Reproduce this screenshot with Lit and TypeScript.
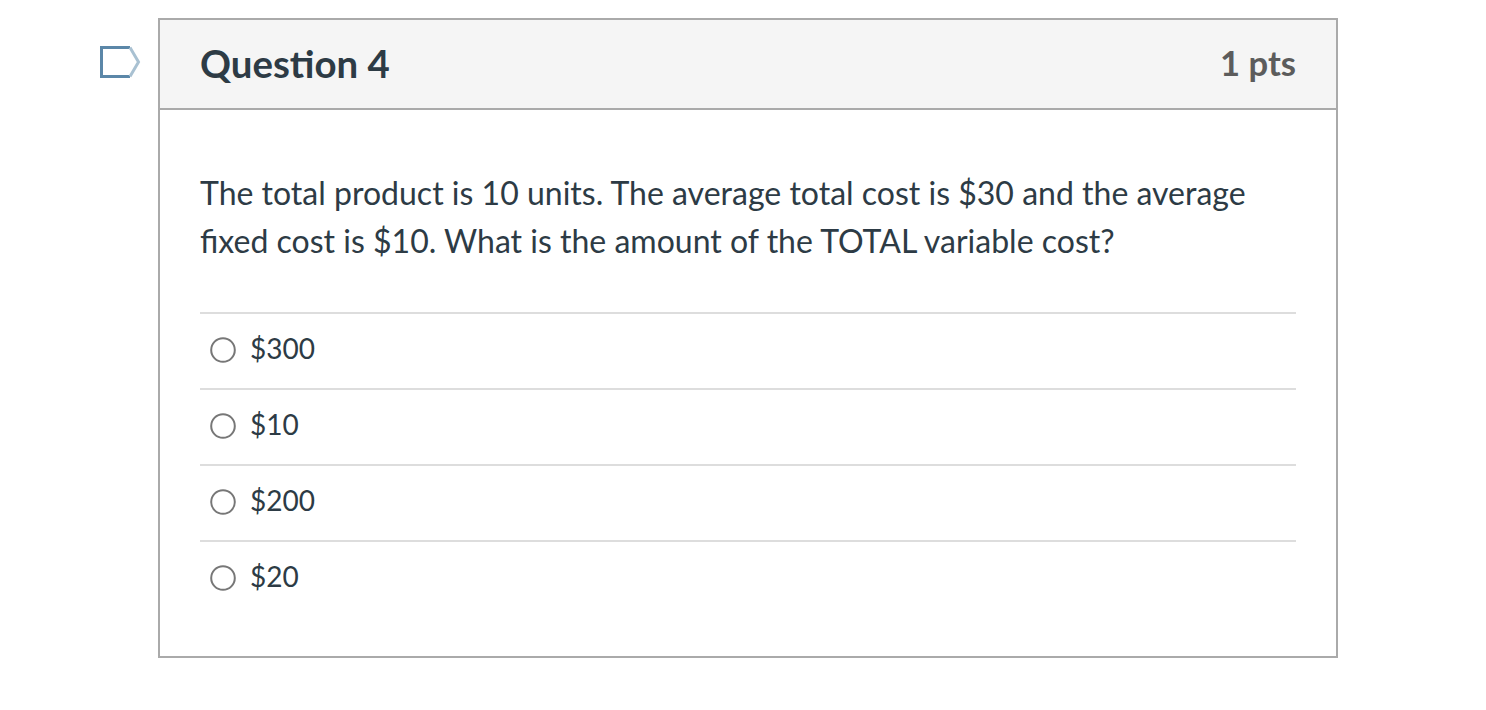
import { LitElement, html, css } from "lit";
import { customElement } from "lit/decorators.js";

@customElement("app-root")
export class AppRoot extends LitElement {
  static styles = css`
    :host { display: block; font-family: Lato, "Open Sans", sans-serif; color: #2d3b45; background: #fff; height: 710px; overflow: hidden; }
    .page { padding: 18px 148px 0 158px; }
    .card { position: relative; box-sizing: border-box; height: 640px; border: 2px solid #aaaaaa; background: #fff; }
    .flag { position: absolute; left: -60px; top: 26px; width: 42px; height: 34px; }
    .head { box-sizing: border-box; height: 90px; display: flex; align-items: center; justify-content: space-between; padding: 0 40px 2px; background: #f5f5f5; border-bottom: 2px solid #aaaaaa; }
    .title { font-size: 38.4px; font-weight: 700; }
    .pts { font-size: 34.6px; font-weight: 700; color: #5c5c5c; margin-top: -1px; }
    .body { padding: 59px 40px 0; }
    .text { margin: 0 0 47px; font-size: 32.03px; line-height: 48px; }
    .opt { box-sizing: border-box; height: 76px; border-top: 2px solid #dddddd; display: flex; align-items: center; gap: 14px; padding: 0 0 0 10px; font-size: 28px; }
    .radio { width: 26px; height: 26px; margin-top: -2px; }
    .val { margin-top: -7px; }
  `;

  render() {
    const options = ["$300", "$10", "$200", "$20"];
    return html`<div class="page">
      <div class="card">
        <svg class="flag" viewBox="0 0 42 34" aria-hidden="true">
          <path d="M1.5 1.5H30M1.5 30.5H30M1.5 0V32" fill="none" stroke="#5b87a8" stroke-width="3"/>
          <path d="M30 1.5L38.5 16L30 30.5" fill="none" stroke="#a9c1d2" stroke-width="3"/>
        </svg>
        <div class="head">
          <div class="title">Question 4</div>
          <div class="pts">1 pts</div>
        </div>
        <div class="body">
          <p class="text">The total product is 10 units. The average total cost is $30 and the average fixed cost is $10. What is the amount of the TOTAL variable cost?</p>
          ${options.map(
            (o) => html`<div class="opt">
              <svg class="radio" viewBox="0 0 26 26" aria-hidden="true"><circle cx="13" cy="13" r="11.8" fill="#fff" stroke="#777" stroke-width="2"/></svg>
              <span class="val">${o}</span>
            </div>`
          )}
        </div>
      </div>
    </div>`;
  }
}
